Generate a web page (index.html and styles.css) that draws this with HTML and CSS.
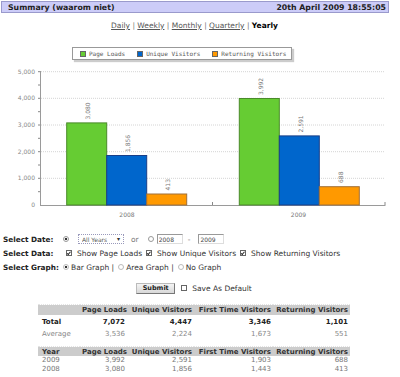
FILE: index.html
```html
<!DOCTYPE html>
<html lang="en">
<head>
    <meta charset="UTF-8">
    <title>Summary</title>
    <link rel="stylesheet" href="styles.css">
</head>
<body>
    <div class="titlebar">
        <span>Summary (waarom niet)</span>
        <span>20th April 2009 18:55:05</span>
    </div>

    <div class="nav">
        <a href="#">Daily</a> | <a href="#">Weekly</a> | <a href="#">Monthly</a> | <a href="#">Quarterly</a> | <b>Yearly</b>
    </div>

    <div class="legend">
        <span class="key"><i class="swatch green"></i>Page Loads</span>
        <span class="key"><i class="swatch blue"></i>Unique Visitors</span>
        <span class="key"><i class="swatch orange"></i>Returning Visitors</span>
    </div>

    <svg class="chart" width="400" height="165" viewBox="0 60 400 165">
        <g class="grid">
            <line x1="41" y1="71.7" x2="385" y2="71.7"/>
            <line x1="41" y1="98.3" x2="385" y2="98.3"/>
            <line x1="41" y1="125" x2="385" y2="125"/>
            <line x1="41" y1="151.7" x2="385" y2="151.7"/>
            <line x1="41" y1="178.3" x2="385" y2="178.3"/>
        </g>
        <g class="ticks">
            <line x1="38" y1="71.7" x2="40" y2="71.7"/>
            <line x1="38" y1="85" x2="40" y2="85"/>
            <line x1="38" y1="98.3" x2="40" y2="98.3"/>
            <line x1="38" y1="111.7" x2="40" y2="111.7"/>
            <line x1="38" y1="125" x2="40" y2="125"/>
            <line x1="38" y1="138.3" x2="40" y2="138.3"/>
            <line x1="38" y1="151.7" x2="40" y2="151.7"/>
            <line x1="38" y1="165" x2="40" y2="165"/>
            <line x1="38" y1="178.3" x2="40" y2="178.3"/>
            <line x1="38" y1="191.7" x2="40" y2="191.7"/>
            <line x1="212.5" y1="202" x2="212.5" y2="205"/>
            <line x1="385" y1="202" x2="385" y2="205"/>
        </g>
        <g class="axis">
            <line x1="40.5" y1="71" x2="40.5" y2="205.5"/>
            <line x1="40" y1="205.5" x2="385.5" y2="205.5"/>
        </g>
        <g class="ylabels">
            <text x="35" y="73.7">5,000</text>
            <text x="35" y="100.3">4,000</text>
            <text x="35" y="127">3,000</text>
            <text x="35" y="153.7">2,000</text>
            <text x="35" y="180.3">1,000</text>
            <text x="35" y="207">0</text>
        </g>

        <rect class="bar green" x="66.7" y="122.9" width="40" height="82.1"/>
        <rect class="bar blue" x="106.7" y="155.5" width="40" height="49.5"/>
        <rect class="bar orange" x="146.7" y="194" width="40" height="11"/>
        <rect class="bar green" x="239.3" y="98.5" width="40" height="106.5"/>
        <rect class="bar blue" x="279.3" y="135.9" width="40" height="69.1"/>
        <rect class="bar orange" x="319.3" y="186.7" width="40" height="18.3"/>

        <g class="values">
            <text transform="translate(88.7 119.5) rotate(-90)">3,080</text>
            <text transform="translate(128.7 152) rotate(-90)">1,856</text>
            <text transform="translate(168.7 190.5) rotate(-90)">413</text>
            <text transform="translate(261.3 95) rotate(-90)">3,992</text>
            <text transform="translate(301.3 132.5) rotate(-90)">2,591</text>
            <text transform="translate(341.3 183) rotate(-90)">688</text>
        </g>
        <g class="xlabels">
            <text x="127" y="216.5">2008</text>
            <text x="298.5" y="216.5">2009</text>
        </g>
    </svg>

    <form class="options">
        <div class="row">
            <label class="caption">Select Date:</label>
            <input type="radio" name="range" class="radio" checked>
            <span class="select-wrap">
                <select class="years">
                    <option>All Years</option>
                </select>
                <span class="arrow">&#9662;</span>
            </span>
            <span class="or">or</span>
            <input type="radio" name="range" class="radio">
            <input type="text" class="year" value="2008">
            <span class="dash">-</span>
            <input type="text" class="year" value="2009">
        </div>
        <div class="row">
            <label class="caption">Select Data:</label>
            <label class="check"><input type="checkbox" class="box" checked>Show Page Loads</label>
            <label class="check"><input type="checkbox" class="box" checked>Show Unique Visitors</label>
            <label class="check"><input type="checkbox" class="box" checked>Show Returning Visitors</label>
        </div>
        <div class="row">
            <label class="caption">Select Graph:</label>
            <label class="pick"><input type="radio" name="graph" class="radio" checked>Bar Graph |</label>
            <label class="pick"><input type="radio" name="graph" class="radio">Area Graph |</label>
            <label class="pick"><input type="radio" name="graph" class="radio">No Graph</label>
        </div>
        <div class="submit-row">
            <button type="button" class="submit">Submit</button>
            <label class="check"><input type="checkbox" class="box">Save As Default</label>
        </div>
    </form>

    <table class="stats totals">
        <tr class="head">
            <th></th>
            <th>Page Loads</th>
            <th>Unique Visitors</th>
            <th>First Time Visitors</th>
            <th>Returning Visitors</th>
        </tr>
        <tr class="total">
            <td>Total</td>
            <td>7,072</td>
            <td>4,447</td>
            <td>3,346</td>
            <td>1,101</td>
        </tr>
        <tr class="average">
            <td>Average</td>
            <td>3,536</td>
            <td>2,224</td>
            <td>1,673</td>
            <td>551</td>
        </tr>
    </table>

    <table class="stats years-table">
        <tr class="head">
            <th>Year</th>
            <th>Page Loads</th>
            <th>Unique Visitors</th>
            <th>First Time Visitors</th>
            <th>Returning Visitors</th>
        </tr>
        <tr class="year-row">
            <td>2009</td>
            <td>3,992</td>
            <td>2,591</td>
            <td>1,903</td>
            <td>688</td>
        </tr>
        <tr class="year-row">
            <td>2008</td>
            <td>3,080</td>
            <td>1,856</td>
            <td>1,443</td>
            <td>413</td>
        </tr>
    </table>
</body>
</html>
```

FILE: styles.css
```css
body {
    margin: 0;
    font-family: "DejaVu Sans", Verdana, sans-serif;
    font-size: 7px;
    color: #333;
    background: #fff;
}
.titlebar {
    display: flex;
    justify-content: space-between;
    align-items: center;
    box-sizing: border-box;
    width: 388px;
    height: 12px;
    margin: 1px 0 0 1px;
    padding: 0 2px 0 6px;
    background-color: #ccccf8;
    border: 1px solid #9a9acc;
    font-size: 7.8px;
    font-weight: bold;
    color: #222;
}
.nav {
    width: 389px;
    height: 10px;
    line-height: 10px;
    margin-top: 8px;
    text-align: center;
    font-size: 7.5px;
    color: #777;
}
.nav a {
    color: #555;
    text-decoration: underline;
}
.nav b {
    color: #000;
}
.legend {
    display: flex;
    align-items: center;
    box-sizing: border-box;
    width: 220px;
    height: 13px;
    margin: 16px 0 0 72px;
    padding-left: 7px;
    border: 1px solid #999;
    box-shadow: 2px 2px 1px #ccc;
    font-family: "DejaVu Sans Mono", monospace;
    font-size: 6px;
    color: #555;
    white-space: nowrap;
}
.key {
    display: flex;
    align-items: center;
    flex-shrink: 0;
    margin-right: 12px;
}
.swatch {
    display: inline-block;
    width: 4px;
    height: 4px;
    margin-right: 3px;
    border: 1px solid #666;
}
.swatch.green { background-color: #66cc33; }
.swatch.blue { background-color: #0066cc; }
.swatch.orange { background-color: #ff9900; }

.chart {
    display: block;
}
.chart text {
    font-family: "DejaVu Sans", Verdana, sans-serif;
    font-size: 6px;
}
.grid line {
    stroke: #d4d4d4;
    stroke-width: 1;
    stroke-dasharray: 1 1;
}
.ticks line {
    stroke: #888;
    stroke-width: 1;
}
.axis line {
    stroke: #9a9a9a;
    stroke-width: 1;
}
.ylabels text {
    fill: #888;
    text-anchor: end;
}
.xlabels text {
    fill: #777;
    text-anchor: middle;
}
.values text {
    fill: #777;
    dominant-baseline: middle;
}
.bar {
    stroke-width: 1;
}
.bar.green { fill: #66cc33; stroke: #4a8a2a; }
.bar.blue { fill: #0066cc; stroke: #1a3f88; }
.bar.orange { fill: #ff9900; stroke: #a0703a; }

.options {
    margin: 7px 0 0 3px;
    font-size: 7.5px;
}
.row {
    display: flex;
    align-items: center;
    height: 14px;
    white-space: nowrap;
}
.caption {
    width: 60px;
    font-size: 7.3px;
    font-weight: bold;
    color: #222;
}
.radio,
.box {
    -webkit-appearance: none;
    appearance: none;
    box-sizing: border-box;
    flex-shrink: 0;
    width: 6px;
    height: 6px;
    margin: 0 3px 0 0;
    border: 1px solid #888;
    background: #fff;
    position: relative;
}
.radio {
    border-radius: 50%;
    border-color: #999;
}
.radio:checked {
    background: radial-gradient(circle, #333 0 1.2px, #fff 1.6px);
}
.box {
    margin: 0 5px 0 3px;
    border-color: #666;
}
.box:checked::after {
    content: "";
    position: absolute;
    left: 1px;
    top: 0;
    width: 1px;
    height: 2.5px;
    border: solid #222;
    border-width: 0 1px 1px 0;
    transform: rotate(40deg);
}
.select-wrap {
    position: relative;
    display: inline-flex;
    margin-left: 6px;
}
.years {
    -webkit-appearance: none;
    appearance: none;
    box-sizing: border-box;
    width: 46px;
    height: 10px;
    padding: 0 0 0 3px;
    font-family: inherit;
    font-size: 6px;
    color: #555;
    border: 1px dotted #99b;
    border-radius: 0;
    background: #fff;
}
.arrow {
    position: absolute;
    right: 4px;
    top: 1px;
    font-size: 6px;
    line-height: 8px;
    color: #333;
}
.or {
    margin: 0 9px 0 7px;
    color: #777;
}
.year {
    box-sizing: border-box;
    width: 26px;
    height: 10px;
    margin: 0;
    padding: 0 1px;
    font-family: inherit;
    font-size: 6px;
    color: #444;
    border: 1px solid #999;
    border-right-color: #ddd;
    border-bottom-color: #ddd;
}
.dash {
    margin: 0 8px 0 5px;
    color: #777;
}
.check,
.pick {
    display: flex;
    align-items: center;
    margin-right: 1px;
}
.pick {
    margin-right: 4px;
}
.pick .radio {
    margin-right: 2px;
    border-color: #bbb;
}
.submit-row {
    display: flex;
    justify-content: center;
    align-items: center;
    width: 383px;
    height: 12px;
    margin-top: 8px;
}
.submit {
    height: 11px;
    width: 39px;
    padding: 0;
    margin-right: 3px;
    font-family: inherit;
    font-size: 6.5px;
    font-weight: bold;
    color: #222;
    background: linear-gradient(#f4f4f4, #d8d8d8);
    border: 1px solid #777;
    border-top-color: #bbb;
    border-left-color: #bbb;
}

.stats {
    border-collapse: collapse;
    margin-left: 38px;
    width: 312px;
    table-layout: fixed;
}
.stats th,
.stats td {
    padding: 0 2px;
    text-align: right;
    white-space: nowrap;
}
.stats th:first-child,
.stats td:first-child {
    text-align: left;
    width: 36px;
    padding-left: 4px;
}
.stats th:nth-child(2) { width: 43px; }
.stats th:nth-child(3) { width: 63px; }
.stats th:nth-child(4) { width: 75px; }
.stats .head th {
    height: 10px;
    background-color: #cccccc;
    border-top: 1px dotted #e4e4e4;
    color: #333;
    font-weight: bold;
}
.totals {
    margin-top: 10px;
}
.total td {
    height: 13px;
    font-weight: bold;
    color: #222;
}
.average td {
    height: 11px;
    color: #888;
}
.years-table {
    margin-top: 7px;
}
.years-table .head th {
    height: 9px;
}
.year-row td {
    height: 9px;
    line-height: 9px;
    color: #777;
}
```
